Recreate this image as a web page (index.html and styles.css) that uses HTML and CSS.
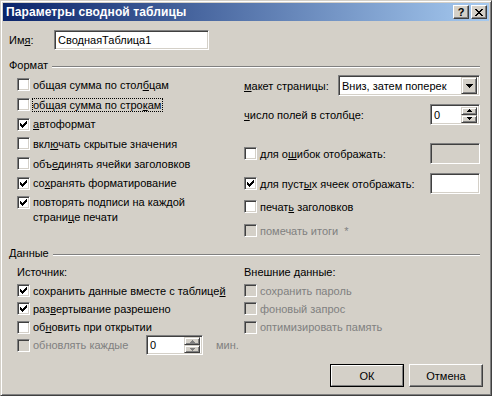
FILE: index.html
```html
<!DOCTYPE html>
<html lang="ru">
<head>
<meta charset="utf-8">
<title>Параметры сводной таблицы</title>
<link rel="stylesheet" href="styles.css">
</head>
<body>
<div class="window">
  <div class="titlebar">
    <span class="title">Параметры сводной таблицы</span>
    <div class="tbtns">
      <span class="tbtn help">?</span>
      <span class="tbtn close"><svg width="8" height="7" viewBox="0 0 8 7" shape-rendering="crispEdges"><path d="M0 0h2v1h-2zM6 0h2v1h-2zM1 1h2v1h-2zM5 1h2v1h-2zM2 2h4v1h-4zM3 3h2v1h-2zM2 4h4v1h-4zM1 5h2v1h-2zM5 5h2v1h-2zM0 6h2v1h-2zM6 6h2v1h-2z" fill="#000"/></svg></span>
    </div>
  </div>

  <div class="content">
    <div class="name-row">
      <span class="name-label">Им<u>я</u>:</span>
      <span class="edit name-edit">СводнаяТаблица1</span>
    </div>

    <div class="group-head fmt-head"><span>Формат</span><span class="etch"></span></div>
    <div class="fmt-grid">
      <div class="col left">
        <div class="cb-row"><span class="cb"></span><span>общая сумма по стол<u>б</u>цам</span></div>
        <div class="cb-row"><span class="cb"></span><span class="focus">общая сумма по стро<u>к</u>ам</span></div>
        <div class="cb-row"><span class="cb on"><svg width="13" height="13" viewBox="0 0 13 13" shape-rendering="crispEdges"><path d="M3 5h1v3h-1zM4 6h1v3h-1zM5 7h1v3h-1zM6 6h1v3h-1zM7 5h1v3h-1zM8 4h1v3h-1zM9 3h1v3h-1z" fill="#000"/></svg></span><span><u>а</u>втоформат</span></div>
        <div class="cb-row"><span class="cb"></span><span>вкл<u>ю</u>чать скрытые значения</span></div>
        <div class="cb-row"><span class="cb"></span><span>объ<u>е</u>динять ячейки заголовков</span></div>
        <div class="cb-row"><span class="cb on"><svg width="13" height="13" viewBox="0 0 13 13" shape-rendering="crispEdges"><path d="M3 5h1v3h-1zM4 6h1v3h-1zM5 7h1v3h-1zM6 6h1v3h-1zM7 5h1v3h-1zM8 4h1v3h-1zM9 3h1v3h-1z" fill="#000"/></svg></span><span>со<u>х</u>ранять форматирование</span></div>
        <div class="cb-row multi"><span class="cb on"><svg width="13" height="13" viewBox="0 0 13 13" shape-rendering="crispEdges"><path d="M3 5h1v3h-1zM4 6h1v3h-1zM5 7h1v3h-1zM6 6h1v3h-1zM7 5h1v3h-1zM8 4h1v3h-1zM9 3h1v3h-1z" fill="#000"/></svg></span><span>повторять подписи на каждой<br>страни<u>ц</u>е печати</span></div>
      </div>
      <div class="col right">
        <div class="field-row r-layout">
          <span><u>м</u>акет страницы:</span>
          <span class="edit select"><span class="sel-text">Вниз, затем поперек</span><span class="ddbtn"><svg width="7" height="4" viewBox="0 0 7 4" shape-rendering="crispEdges"><path d="M0 0h7v1h-7zM1 1h5v1h-5zM2 2h3v1h-3zM3 3h1v1h-1z" fill="#000"/></svg></span></span>
        </div>
        <div class="field-row r-count">
          <span><u>ч</u>исло полей в столбце:</span>
          <span class="edit spin"><span class="spin-text">0</span><span class="spin-btns"><span class="sbtn"><svg width="5" height="3" viewBox="0 0 5 3" shape-rendering="crispEdges"><path d="M2 0h1v1h-1zM1 1h3v1h-3zM0 2h5v1h-5z" fill="#000"/></svg></span><span class="sbtn"><svg width="5" height="3" viewBox="0 0 5 3" shape-rendering="crispEdges"><path d="M0 0h5v1h-5zM1 1h3v1h-3zM2 2h1v1h-1z" fill="#000"/></svg></span></span></span>
        </div>
        <div class="field-row r-err">
          <span class="cb-row"><span class="cb"></span><span>для о<u>ш</u>ибок отображать:</span></span>
          <span class="edit small disabled"></span>
        </div>
        <div class="field-row r-empty">
          <span class="cb-row"><span class="cb on"><svg width="13" height="13" viewBox="0 0 13 13" shape-rendering="crispEdges"><path d="M3 5h1v3h-1zM4 6h1v3h-1zM5 7h1v3h-1zM6 6h1v3h-1zM7 5h1v3h-1zM8 4h1v3h-1zM9 3h1v3h-1z" fill="#000"/></svg></span><span>для пуст<u>ы</u>х ячеек отображать:</span></span>
          <span class="edit small"></span>
        </div>
        <div class="cb-row r-print"><span class="cb"></span><span>печат<u>ь</u> заголовков</span></div>
        <div class="cb-row r-mark dis"><span class="cb"></span><span>помечать итоги &nbsp;*</span></div>
      </div>
    </div>

    <div class="group-head data-head"><span>Данные</span><span class="etch"></span></div>
    <div class="data-grid">
      <div class="col left">
        <div class="sub-label">Источник:</div>
        <div class="cb-row d"><span class="cb on"><svg width="13" height="13" viewBox="0 0 13 13" shape-rendering="crispEdges"><path d="M3 5h1v3h-1zM4 6h1v3h-1zM5 7h1v3h-1zM6 6h1v3h-1zM7 5h1v3h-1zM8 4h1v3h-1zM9 3h1v3h-1z" fill="#000"/></svg></span><span>сохранить данные вместе с таблице<u>й</u></span></div>
        <div class="cb-row d"><span class="cb on"><svg width="13" height="13" viewBox="0 0 13 13" shape-rendering="crispEdges"><path d="M3 5h1v3h-1zM4 6h1v3h-1zM5 7h1v3h-1zM6 6h1v3h-1zM7 5h1v3h-1zM8 4h1v3h-1zM9 3h1v3h-1z" fill="#000"/></svg></span><span>раз<u>в</u>ертывание разрешено</span></div>
        <div class="cb-row d"><span class="cb"></span><span>об<u>н</u>овить при открытии</span></div>
        <div class="cb-row d dis refresh"><span class="cb"></span><span class="refresh-label">обновлять каждые</span><span class="edit spin mini disabled-spin"><span class="spin-text">0</span><span class="spin-btns"><span class="sbtn"><svg width="5" height="3" viewBox="0 0 5 3" shape-rendering="crispEdges"><path d="M2 0h1v1h-1zM1 1h3v1h-3zM0 2h5v1h-5z" fill="#808080"/></svg></span><span class="sbtn"><svg width="5" height="3" viewBox="0 0 5 3" shape-rendering="crispEdges"><path d="M0 0h5v1h-5zM1 1h3v1h-3zM2 2h1v1h-1z" fill="#808080"/></svg></span></span></span><span class="min">мин.</span></div>
      </div>
      <div class="col right">
        <div class="sub-label">Внешние данные:</div>
        <div class="cb-row d dis"><span class="cb"></span><span>сохранить пароль</span></div>
        <div class="cb-row d dis"><span class="cb"></span><span>фоновый запрос</span></div>
        <div class="cb-row d dis"><span class="cb"></span><span>оптимизировать память</span></div>
      </div>
    </div>
  </div>

  <div class="footer">
    <span class="btn default"><span class="btn-in">ОК</span></span>
    <span class="btn"><span class="btn-in">Отмена</span></span>
  </div>
</div>
</body>
</html>
```

FILE: styles.css
```css
html, body {
  margin: 0;
  padding: 0;
  background: #D4D0C8;
}

.window {
  width: 492px;
  height: 396px;
  box-sizing: border-box;
  border: 1px solid;
  border-color: #D4D0C8 #404040 #404040 #D4D0C8;
  box-shadow: inset 1px 1px #fff, inset -1px -1px #808080;
  padding: 2px;
  background: #D4D0C8;
  display: flex;
  flex-direction: column;
  font-family: "Liberation Sans", Arial, sans-serif;
  font-size: 11px;
  color: #000;
}

u { text-decoration: underline; text-underline-offset: 1px; }

/* title bar */
.titlebar {
  height: 18px;
  flex: none;
  display: flex;
  align-items: center;
  justify-content: space-between;
  background: linear-gradient(to right, #0A246A, #A6CAF0);
  padding: 0 2px 0 3px;
}
.title {
  color: #fff;
  font-weight: bold;
  font-size: 12px;
  letter-spacing: 0.1px;
}
.tbtns { display: flex; gap: 2px; }
.tbtn {
  width: 16px;
  height: 14px;
  box-sizing: border-box;
  background: #D4D0C8;
  border: 1px solid;
  border-color: #fff #404040 #404040 #fff;
  box-shadow: inset -1px -1px #808080;
  display: flex;
  align-items: center;
  justify-content: center;
  font-weight: bold;
  font-size: 11px;
  line-height: 12px;
}
.tbtn.close svg { margin-left: -1px; }

/* content */
.content {
  padding: 0 6px;
}

.name-row {
  display: flex;
  align-items: center;
  margin-top: 9px;
  height: 20px;
}
.name-label { width: 45px; }

.edit {
  box-sizing: border-box;
  background: #fff;
  border: 1px solid;
  border-color: #808080 #fff #fff #808080;
  box-shadow: inset 1px 1px #404040, inset -1px -1px #D4D0C8;
  display: flex;
  align-items: center;
}
.name-edit {
  width: 155px;
  height: 20px;
  padding-left: 3px;
}

.group-head {
  display: flex;
  align-items: center;
  height: 14px;
}
.group-head .etch {
  flex: 1;
  height: 0;
  border-top: 1px solid #808080;
  border-bottom: 1px solid #fff;
  margin: 3px 3px 0 4px;
}
.fmt-head { margin-top: 8px; }

.fmt-grid {
  display: grid;
  grid-template-columns: 227px 1fr;
  padding-left: 8px;
  margin-top: 3px;
}
.col { display: flex; flex-direction: column; }

.cb-row {
  display: flex;
  align-items: center;
  height: 19.7px;
  white-space: nowrap;
}
.cb {
  width: 13px;
  height: 13px;
  flex: none;
  box-sizing: border-box;
  background: #fff;
  border: 1px solid;
  border-color: #808080 #fff #fff #808080;
  box-shadow: inset 1px 1px #404040, inset -1px -1px #D4D0C8;
  margin-right: 3px;
  position: relative;
}
.cb svg { position: absolute; left: -1px; top: -1px; }
.dis { color: #808080; }
.dis .cb { background: #D4D0C8; }

.focus { outline: 1px dotted #000; outline-offset: 0; padding: 0 1px 0 0; }

.cb-row.multi {
  align-items: flex-start;
  height: auto;
  line-height: 15px;
  margin-top: 2px;
}
.cb-row.multi .cb { margin-top: 1px; }

/* right column of Формат */
.field-row {
  display: flex;
  align-items: center;
  justify-content: space-between;
  height: 21px;
  width: 236px;
}
.select {
  width: 142px;
  height: 21px;
  padding-left: 3px;
  justify-content: space-between;
  padding-right: 2px;
}
.ddbtn {
  width: 16px;
  height: 17px;
  box-sizing: border-box;
  background: #D4D0C8;
  border: 1px solid;
  border-color: #D4D0C8 #404040 #404040 #D4D0C8;
  box-shadow: inset 1px 1px #fff, inset -1px -1px #808080;
  display: flex;
  align-items: center;
  justify-content: center;
}
.spin {
  width: 50px;
  height: 21px;
  padding: 0 2px 0 3px;
  justify-content: space-between;
}
.spin-btns {
  display: flex;
  flex-direction: column;
}
.sbtn {
  width: 16px;
  height: 8px;
  box-sizing: border-box;
  background: #D4D0C8;
  border: 1px solid;
  border-color: #D4D0C8 #404040 #404040 #D4D0C8;
  box-shadow: inset 1px 1px #fff, inset -1px -1px #808080;
  display: flex;
  align-items: center;
  justify-content: center;
}
.small { width: 50px; height: 21px; }
.small.disabled { background: #D4D0C8; }

.r-count { margin-top: 8px; }
.r-err { margin-top: 18px; }
.r-empty { margin-top: 9px; }
.r-print { margin-top: 3px; }
.r-mark { margin-top: 4px; }

/* data */
.data-head { margin-top: 6px; }
.data-grid {
  display: grid;
  grid-template-columns: 227px 1fr;
  padding-left: 8px;
  margin-top: 3px;
}
.sub-label { height: 18px; display: flex; align-items: center; }
.cb-row.d { height: 18.3px; }
.refresh-label { width: 113px; }
.mini { width: 57px; height: 20px; }
.disabled-spin { background: #fff; color: #000; }
.min { margin-left: 13px; }

/* footer buttons */
.footer {
  margin-top: auto;
  display: flex;
  justify-content: flex-end;
  gap: 5px;
  padding: 0 6px 6px 0;
}
.btn {
  width: 74px;
  height: 23px;
  box-sizing: border-box;
  background: #D4D0C8;
  border: 1px solid;
  border-color: #fff #404040 #404040 #fff;
  box-shadow: inset -1px -1px #808080;
  display: flex;
}
.btn.default {
  border: 1px solid #000;
  box-shadow: none;
}
.btn.default .btn-in {
  border: 1px solid;
  border-color: #fff #808080 #808080 #fff;
}
.btn-in {
  flex: 1;
  display: flex;
  align-items: center;
  justify-content: center;
}
```
